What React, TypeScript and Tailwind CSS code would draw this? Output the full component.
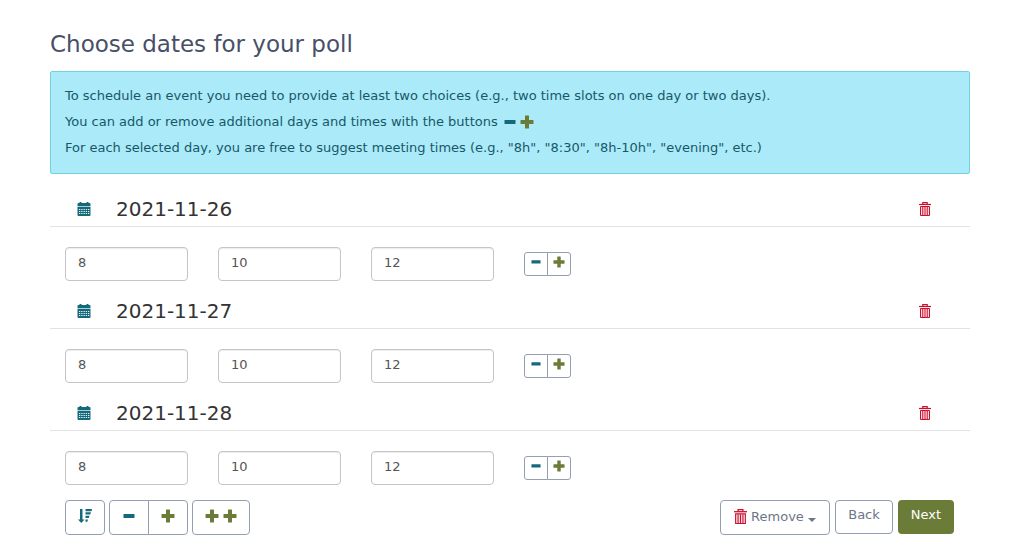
import React from "react";

const days = ["2021-11-26", "2021-11-27", "2021-11-28"];
const slots = ["8", "10", "12"];

const Minus = ({ className = "w-3" }: { className?: string }) => (
  <svg viewBox="0 0 12 14" className={`inline-block text-[#16697a] ${className}`} fill="currentColor" aria-hidden="true">
    <rect x="0.5" y="5" width="11" height="4" rx="0.6" />
  </svg>
);

const Plus = ({ className = "w-[14px]" }: { className?: string }) => (
  <svg viewBox="0 0 14 14" className={`inline-block text-[#6b7c38] ${className}`} fill="currentColor" aria-hidden="true">
    <path d="M5.500.5h3q.5 0 .5.5v4h4q.5 0 .5.5v3q0 .5-.5.5H9v4q0 .5-.5.5h-3q-.5 0-.5-.5V9H1q-.5 0-.5-.5v-3q0-.5.5-.5h4V1q0-.5.5-.5z" />
  </svg>
);

const Calendar = () => (
  <svg viewBox="0 0 14 14" className="size-[14px]" aria-hidden="true">
    <path d="M.5 2q0-1 1-1h1V0h2v1h5V0h2v1h1q1 0 1 1v2H.5z" fill="#16697a" />
    <path d="M.5 4h13v1H.5z" fill="#a9cfd6" />
    <path d="M.5 5h13v8q0 1-1 1h-11q-1 0-1-1z" fill="#16697a" />
    <path
      d="M2 7.500h1.300M4.250 7.500h1.300M6.500 7.500h1.300M8.750 7.500h1.300M11 7.500h1.300M2 9.500h1.300M4.250 9.500h1.300M6.500 9.500h1.300M8.750 9.500h1.300M11 9.500h1.300M2 11.500h1.300M4.250 11.500h1.300M6.500 11.500h1.300M8.750 11.500h1.300M11 11.500h1.300"
      stroke="#e8f4f6"
      strokeWidth="1"
    />
  </svg>
);

const Trash = ({ className }: { className: string }) => (
  <svg viewBox="0 0 12 14" className={`inline-block ${className}`} fill="none" stroke="#c8102e" aria-hidden="true">
    <path d="M1.500 4.500h9v9h-9z" fill="#fbdde1" />
    <path d="M3.750 5v8M6 5v8M8.250 5v8" />
    <path d="M0 2.500h12" strokeWidth="1.200" />
    <path d="M3.800 2V.6h4.400V2" strokeWidth="1.200" />
  </svg>
);

const Sort = () => (
  <svg viewBox="0 0 14 14" className="inline-block w-[14px]" fill="#16697a" aria-hidden="true">
    <path d="M2 0h2.500v10.500h2L3.250 14 0 10.500h2z" />
    <path d="M7.500 0H14l-.5 2.200h-6zM7.500 3.300h5.500l-.8 2.200H7.500zM7.500 6.800h4l-.7 2.200H7.500zM7.500 10.500h2.500l-.6 2.200H7.500z" />
  </svg>
);

const button = "flex items-center justify-center border border-[#949fb5] bg-white";

const App = () => {
  return (
    <main className="bg-white pt-7 pr-12 pl-[50px] font-['DejaVu_Sans',sans-serif] text-[13px] text-[#555]">
      <h1 className="text-[23px] leading-8 text-[#475067]">Choose dates for your poll</h1>

      <div className="mt-[11px] rounded-xs border border-[#72d3df] bg-[#abeaf9] px-[14px] pt-[11px] pb-3 leading-[26px] text-[#175868]">
        <p>To schedule an event you need to provide at least two choices (e.g., two time slots on one day or two days).</p>
        <p className="flex items-center">
          You can add or remove additional days and times with the buttons
          <span className="ml-[6px] flex items-center gap-1">
            <Minus />
            <Plus />
          </span>
        </p>
        <p>For each selected day, you are free to suggest meeting times (e.g., "8h", "8:30", "8h-10h", "evening", etc.)</p>
      </div>

      <form className="mt-[18px]" onSubmit={(e) => e.preventDefault()}>
        {days.map((day) => (
          <fieldset key={day} className="mb-[13px]">
            <div className="flex h-[35px] items-center border-b border-[#e2e2e2] pr-[39px] pl-[27px]">
              <Calendar />
              <h2 className="ml-[25px] text-xl text-[#333]">{day}</h2>
              <button type="button" aria-label={`Remove ${day}`} className="ml-auto flex">
                <Trash className="w-3" />
              </button>
            </div>
            <div className="mt-5 flex items-center gap-[30px] px-[15px]">
              {slots.map((slot, i) => (
                <input
                  key={slot}
                  type="text"
                  aria-label={`Time ${i + 1} on ${day}`}
                  defaultValue={slot}
                  className="h-[34px] w-[123px] rounded-sm border border-[#c5c5c5] bg-white px-3 pb-1 shadow-[inset_0_1px_1px_rgba(0,0,0,0.075)]"
                />
              ))}
              <div className="flex">
                <button type="button" aria-label="Remove a time" className={`${button} h-6 w-6 rounded-l-[3px] pb-1`}>
                  <Minus className="w-[10px]" />
                </button>
                <button type="button" aria-label="Add a time" className={`${button} -ml-px h-6 w-6 rounded-r-[3px] pb-1`}>
                  <Plus className="w-3" />
                </button>
              </div>
            </div>
          </fieldset>
        ))}

        <div className="flex items-start justify-between pt-[2px] pr-4 pl-[15px] text-[#6b7688]">
          <div className="flex gap-1">
            <button type="button" aria-label="Sort the dates" className={`${button} h-[35px] w-10 rounded-sm pb-1`}>
              <Sort />
            </button>
            <div className="flex">
              <button type="button" aria-label="Remove a day" className={`${button} h-[35px] w-10 rounded-l-sm pb-1`}>
                <Minus />
              </button>
              <button type="button" aria-label="Add a day" className={`${button} -ml-px h-[35px] w-10 rounded-r-sm pb-1`}>
                <Plus />
              </button>
            </div>
            <button type="button" aria-label="Add range dates" className={`${button} h-[35px] w-[58px] gap-1 rounded-sm pb-1`}>
              <Plus />
              <Plus />
            </button>
          </div>
          <div className="flex gap-[5px]">
            <button type="button" className={`${button} h-[35px] w-[110px] rounded-sm pb-[2px]`}>
              <Trash className="mr-1 w-[13px]" />
              Remove
              <span className="mt-[6px] ml-1 border-x-4 border-t-4 border-x-transparent border-t-current" />
            </button>
            <button type="button" className={`${button} h-[34px] w-[58px] rounded-sm pb-1`}>
              Back
            </button>
            <button type="submit" className="h-[34px] w-14 rounded-sm bg-[#6b7c38] pb-1 text-white">
              Next
            </button>
          </div>
        </div>
      </form>
    </main>
  );
};

export default App;
